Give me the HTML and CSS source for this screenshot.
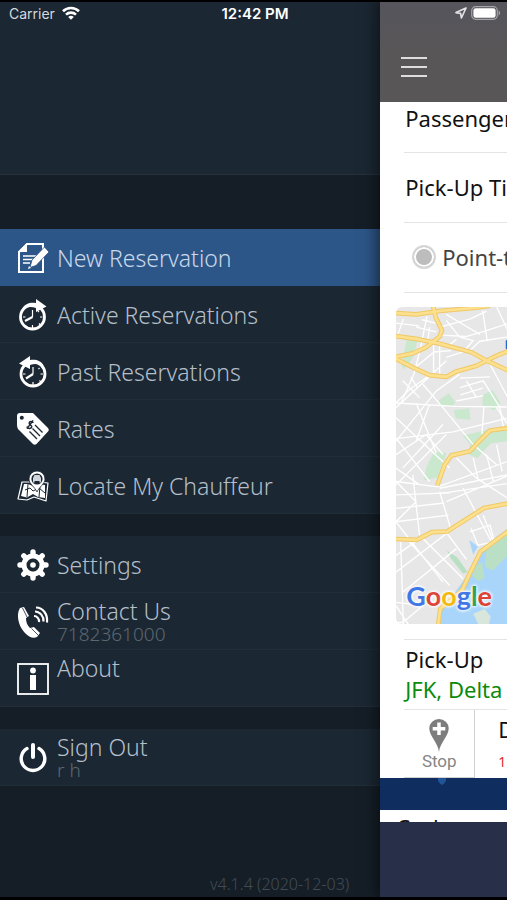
FILE: index.html
```html
<!DOCTYPE html>
<html lang="en">

<head>
  <meta charset="UTF-8">
  <meta name="viewport" content="width=device-width, initial-scale=1.0">
  <title>New Reservation</title>
  <link rel="stylesheet" href="styles.css">
</head>

<body>
  <div class="app">
    <div class="status-bar">
      <div class="status-left">
        <span>Carrier</span>
        <svg class="wifi" viewBox="0 0 18 14" fill="none" stroke="#fff" stroke-width="2.6">
          <path d="M1 5.2a11.5 11.5 0 0 1 16 0" />
          <path d="M4 8.6a7.2 7.2 0 0 1 10 0" />
          <path d="M9 13.8 6.2 11a4 4 0 0 1 5.6 0z" fill="#fff" stroke="none" />
        </svg>
      </div>
      <span class="status-time">12:42 PM</span>
      <div class="status-right">
        <svg class="location" viewBox="0 0 12 12" fill="none" stroke="#e4e4e6" stroke-width="1.6" stroke-linejoin="round">
          <path d="M11 1 1 5.6l4.6.8.8 4.6z" />
        </svg>
        <svg class="battery" viewBox="0 0 30 14">
          <rect x=".7" y=".7" width="25.6" height="12.6" rx="4" fill="none" stroke="#a5a4a7" stroke-width="1.2" />
          <rect x="2.4" y="2.2" width="22.2" height="9.6" rx="2.4" fill="#fff" />
          <path d="M27.6 4.6c2 .8 2 4 0 4.8z" fill="#a5a4a7" />
        </svg>
      </div>
    </div>

    <nav class="drawer">
      <div class="drawer-header"></div>

      <ul class="menu menu-first">
        <li>
          <a href="#new" class="item active">
            <svg class="icon" viewBox="0 0 32 32">
              <path d="M10 2h16v28H2V10z" fill="none" stroke="#fff" stroke-width="2" />
              <path d="M10 1v9H1z" fill="#fff" />
              <path d="M6 14h13M6 17.500h10M6 21h7" stroke="#fff" stroke-width="1.4" />
              <path d="M27.500 5 32 10 19 23.500l-6 2L15 18z" fill="#fff" stroke="#2d5688" stroke-width=".8" />
              <path d="m11 27 1-3 2 2z" fill="#fff" />
            </svg>
            <span class="label">New Reservation</span>
          </a>
        </li>
        <li>
          <a href="#active" class="item">
            <svg class="icon" viewBox="0 0 32 32">
              <circle cx="15.500" cy="18" r="12" fill="none" stroke="#fff" stroke-width="2.800" />
              <path d="M5 10C8 4 14 3 19 4V0l10.500 7.500L19 13V9C14 7 9 8 5 10z" fill="#fff" />
              <path d="M15.500 18 8 22" stroke="#fff" stroke-width="2.200" />
              <path d="M15.500 18v-7M15.500 26v3M6 18h2.500M23 18h2.500M22 24.500l1.500 1.500M22 12l-1 1" stroke="#fff" stroke-width="1.200" />
            </svg>
            <span class="label">Active Reservations</span>
          </a>
        </li>
        <li>
          <a href="#past" class="item">
            <svg class="icon" viewBox="0 0 32 32">
              <circle cx="16" cy="18" r="12" fill="none" stroke="#fff" stroke-width="2.800" />
              <path d="M27 10C24 4 18 3 13 4V0L2 7.500 13 13V9c5-2 10-1 14 1z" fill="#fff" />
              <path d="m16 18-7 4.500" stroke="#fff" stroke-width="2.200" />
              <path d="M16 18v-7M16 26v3M6 18h2.500M23.500 18H26M22.500 24.500 24 26M22.500 12l-1 1" stroke="#fff" stroke-width="1.200" />
            </svg>
            <span class="label">Past Reservations</span>
          </a>
        </li>
        <li>
          <a href="#rates" class="item">
            <svg class="icon" viewBox="0 0 32 32">
              <path d="M3 0h13l15 15q1.500 2 0 3.500L19.500 31q-2 1.500-3.500 0L1 16Q0 14 0 12V3q0-3 3-3z" fill="#fff" />
              <circle cx="4.800" cy="4.800" r="2" fill="#1b2733" />
              <path d="M16 9.500c-1.500-2-4.500-1-4 1s3 1.200 3 3.200-3.500 2.500-5 .3M15.500 7l-5 9" transform="rotate(8 13 12)" fill="none" stroke="#1b2733" stroke-width="1.500" />
              <path d="m18 12 7.500 7.500M15.500 15.500l7.500 7.500M12.500 18.500l7.500 7.500" stroke="#1b2733" stroke-width="1.300" />
            </svg>
            <span class="label">Rates</span>
          </a>
        </li>
        <li>
          <a href="#locate" class="item">
            <svg class="icon" viewBox="0 0 32 32" stroke-linejoin="round">
              <path d="M5 12 1 29l9 1 7-3 12 4 2-18-8-1z" fill="none" stroke="#fff" stroke-width="1.200" />
              <path d="M7 14 4 26l6 1.500 6-3.500 5 3 7 1V15l-6-1-6 2-5-2z" fill="#fff" />
              <path d="m8 20 5-2 3 3 6-3 6 5M11 14l-1 13M23 16l-1 11" fill="none" stroke="#1b2733" stroke-width="1" />
              <path d="M20 22c-2-5-8-8-8-13a8 8 0 0 1 16 0c0 5-6 8-8 13z" fill="#fff" stroke="#1b2733" stroke-width=".8" />
              <circle cx="20" cy="9" r="5.600" fill="#1b2733" />
              <path d="m16 8 1.500-3h5L24 8v4.500h-1.500V11h-5v1.500H16z" fill="#cfd5da" />
            </svg>
            <span class="label">Locate My Chauffeur</span>
          </a>
        </li>
      </ul>

      <ul class="menu">
        <li>
          <a href="#settings" class="item">
            <svg class="icon" viewBox="0 0 32 32">
              <circle cx="16" cy="16" r="9" fill="none" stroke="#fff" stroke-width="5" />
              <path d="M16 3v4M16 25v4M3 16h4M25 16h4M6.800 6.800l2.800 2.800M22.400 22.400l2.800 2.800M25.200 6.800l-2.800 2.800M9.600 22.400l-2.800 2.800" stroke="#fff" stroke-width="5.400" stroke-linecap="round" />
              <circle cx="16" cy="16" r="4.600" fill="none" stroke="#1b2733" stroke-width="3.600" />
              <circle cx="16" cy="16" r="2.800" fill="#fff" />
            </svg>
            <span class="label">Settings</span>
          </a>
        </li>
        <li>
          <a href="tel:7182361000" class="item">
            <svg class="icon" viewBox="0 0 32 32">
              <path d="M7 1 3 2C-1 8 1 20 8 27c4 4 8 6 12 4l3-4-6-6-4 1c-3-3-4-6-4-10l3-2z" fill="#fff" />
              <path d="m5.500 2 4.500 9M14.500 22.500l6.500 6.500" stroke="#1b2733" stroke-width=".8" />
              <path d="M17 10c3 0 5.500 3 5 6M18 5.500c5 0 9 5 8.500 10M19 1.500c7 0 12 7 11 15" fill="none" stroke="#fff" stroke-width="2.200" />
            </svg>
            <span class="text">
              <span class="label">Contact Us</span>
              <span class="sub">7182361000</span>
            </span>
          </a>
        </li>
        <li>
          <a href="#about" class="item">
            <svg class="icon" viewBox="0 0 32 32">
              <rect x="1" y="1" width="30" height="30" fill="none" stroke="#fff" stroke-width="1.800" />
              <circle cx="16" cy="7.500" r="2.900" fill="#fff" />
              <path d="M13 12h6v15h-6z" fill="#fff" />
            </svg>
            <span class="text">
              <span class="label">About</span>
              <span class="sub"></span>
            </span>
          </a>
        </li>
      </ul>

      <ul class="menu">
        <li>
          <a href="#signout" class="item">
            <svg class="icon" viewBox="0 0 32 32" fill="none" stroke="#fff" stroke-width="3.400" stroke-linecap="round">
              <path d="M10 6.500a11.800 11.800 0 1 0 12 0" />
              <path d="M16 3v12" stroke-width="4" />
            </svg>
            <span class="text">
              <span class="label">Sign Out</span>
              <span class="sub">r h</span>
            </span>
          </a>
        </li>
      </ul>

      <p class="version">v4.1.4 (2020-12-03)</p>
    </nav>

    <main class="page">
      <header class="page-header">
        <button class="menu-button" type="button" aria-label="Menu">
          <span></span>
          <span></span>
          <span></span>
        </button>
      </header>

      <div class="page-content">
        <div class="row row-top">Passenger</div>
        <div class="row">Pick-Up Time</div>
        <label class="row row-radio">
          <input type="radio" name="trip" class="radio">
          Point-to-Point
        </label>

        <div class="map">
          <svg viewBox="0 0 330 951" preserveAspectRatio="xMinYMin slice">
            <defs>
              <g id="highways">
                <path d="m-5 18 65 4 70-10L240 2l40-6" />
                <path d="m110-5 8 35 19 40-7 18-40 32-40 18-55 12" />
                <path d="m-5 86 65 9 65 13 100 27 45 25 70 32" />
                <path d="m-5 152 55 28 50 23 50 5 30-16 60-17 60-30 40-16" />
                <path d="m340 360-60 8-35 35-25 27-55 12-20 28-22 62" />
                <path d="m-5 691 67 3 45-23 45-2 110-70 78-15" />
                <path d="m340 664-88 65-30 60-25 55-65 55-8 60" />
              </g>
            </defs>
            <rect width="1200" height="951" fill="#e7e7e7" />
            <g fill="#c9e8cd">
              <path d="M32 98h32l-12 50-28 38-8-12z" />
              <path d="m128 278 30-22 18 28-4 12h-44z" />
              <path d="m258 262 30-14 24 38-20 22-34-16z" />
              <path d="m172 308 46-6 4 34-44-4z" />
              <path d="m198 384 80-20 55-2v38l-50 6-40 44-30-12 8-30z" />
              <path d="m90 480 24-50 36 6-26 72-40 8z" />
            </g>
            <path d="M333 660 252 720l-40 80-80 110-8 45h209z" fill="#a9d5fb" />
            <path d="m218 694 26 20-14 24z" fill="#a9d5fb" />
            <g fill="#b9e0c4">
              <path d="m152 726 30 20 32 44-14 4-36-44z" />
              <path d="m232 776 24-18 8 50-20 8-16-14z" />
              <path d="m270 720 63-50v70l-45 46-24-14z" />
              <path d="m230 914 34-14 18 22-6 29h-28z" fill="#d8e6dc" />
            </g>
            <!-- side streets -->
            <g fill="none" stroke="#fff" stroke-width="4">
              <path d="m92 28-18 90-20 80-40 90M78 38l40 10M60 60l60 14M100 60l-6 46M22 36l-18 50M0 48l70 8" />
              <path d="m136 84 72 4M130 60l90-24 50-24M208 88l50-14 74-24M258 10l14 92M300 0l33 70M150 40l40 50 40 10-30 34M220 130l30-28 80-12M180 96l-24 20M150 22l100 60" />
              <path d="M112 112v90M130 112v90M60 178l54-44 50-4M150 150l60-20M0 286l40-40 60-42M20 220l50 50M44 210l20 30M0 300l150-140" />
              <path d="M0 286l180 10 153 2M0 400l120-150 70-50M80 230l60 70 90 110 70 60M0 392l170-20 160-40M60 286l60 150M100 290l-40 110" />
              <path d="m190 240 70-20 50 80 10 60M180 280l80-16M192 262l66-20M210 220l30 50M190 212l90-4M280 170l53 100" />
              <path d="m0 330 160 150M0 440l90-60 50 60M20 480l120-130M0 530l150-150M0 390l100 130M262 298l-6 80M300 300l33 50" />
              <path d="m0 520 124 16 209-76M0 480l70 50M130 540l203-40M130 556l203-30M150 580l180-76M180 450l60 60 93 60M230 450l14 60M270 440l20 80M300 410l16 80" />
              <path d="m50 500 20 180M130 550l34 114M0 560l160-6M0 600l144-16M0 640l156-20M200 540l90 170M0 520l60 60-60 60" />
              <path d="m0 640 140 180M0 740l100-70M0 790l170-130M14 700l8 250M40 700l120 130M80 690l120 120M20 850l160-130M0 880l80 10-60 50H0M0 890l40 61" />
              <path d="m150 672 60 80M224 660l20 50 50-10-14-50-60 20M260 620l30 80" />
            </g>
            <g fill="none" stroke-linejoin="round">
              <use href="#highways" stroke="#f0c866" stroke-width="14" />
              <use href="#highways" stroke="#fce08e" stroke-width="8" />
            </g>
            <rect x="327" y="98" width="40" height="28" rx="3" fill="#2b68cb" />
          </svg>
          <div class="google"><span class="blue">G</span><span class="red">o</span><span class="yellow">o</span><span class="blue">g</span><span class="green">l</span><span class="red">e</span></div>
        </div>

        <section class="pickup">
          <div>Pick-Up</div>
          <div class="address">JFK, Delta</div>
        </section>

        <section class="stops">
          <button class="stop-button" type="button">
            <svg class="pin" viewBox="0 0 20 34">
              <path d="M10 34C9 24 0 18 0 9.500a10 9.500 0 0 1 20 0C20 18 11 24 10 34z" fill="#7d7d7d" />
              <path d="M10 3.500v13M3.500 10h13" stroke="#fff" stroke-width="3.600" />
            </svg>
            Stop
          </button>
          <div class="dropoff">
            <div>Drop-Off</div>
            <div class="required">1</div>
          </div>
        </section>

        <div class="band">
          <svg class="band-mark" viewBox="0 0 10 8">
            <path d="M1 0h8q1 4-4 7-5-3-4-7z" fill="#1f5596" />
          </svg>
        </div>
        <div class="row-bottom">Cash</div>
      </div>

      <footer class="page-footer"></footer>
    </main>
  </div>
</body>

</html>
```
FILE: styles.css
```css
* {
  box-sizing: border-box;
}

html,
body {
  margin: 0;
  padding: 0;
  background-color: #000;
  font-family: "Noto Sans", "Open Sans", sans-serif;
}

.app {
  position: relative;
  display: grid;
  grid-template-columns: 3fr 1fr;
  height: 100vh;
  min-height: 900px;
  border-top: 2px solid #000;
  border-bottom: 3px solid #000;
  overflow: hidden;
}

/* status bar */

.status-bar {
  position: absolute;
  top: 0;
  left: 0;
  right: 0;
  z-index: 3;
  display: grid;
  grid-template-columns: 1fr auto 1fr;
  align-items: center;
  height: 22px;
  padding: 0 6px 0 9px;
  color: #fff;
  font-family: Inter, Roboto, sans-serif;
  font-size: 14px;
}

.status-left,
.status-right {
  display: flex;
  align-items: center;
  gap: 7px;
}

.status-left {
  color: #d5dade;
}

.status-right {
  justify-content: flex-end;
  gap: 4px;
}

.status-time {
  font-size: 15px;
  font-weight: 600;
}

.wifi {
  width: 18px;
  height: 14px;
}

.location {
  width: 12px;
  height: 12px;
}

.battery {
  width: 30px;
  height: 14px;
}

/* drawer */

.drawer {
  display: flex;
  flex-direction: column;
  min-width: 0;
  background-color: #151e27;
}

.drawer-header {
  height: 173px;
  background-color: #1b2733;
  border-bottom: 1px solid #25313d;
}

.menu {
  list-style: none;
  margin: 22px 0 0;
  padding: 0;
  background-color: #1b2733;
}

.menu-first {
  margin-top: 54px;
}

.item {
  display: flex;
  align-items: center;
  gap: 8px;
  height: 57px;
  padding: 1px 17px 0;
  border-bottom: 1px solid #212d39;
  color: #b4bfca;
  text-decoration: none;
}

.item.active {
  background-color: #2d5688;
  border-bottom-color: #2d5688;
  color: #c9d8ea;
}

.icon {
  flex: none;
  width: 32px;
  height: 32px;
}

.label,
.sub {
  display: block;
  font-weight: 300;
  white-space: nowrap;
}

.label {
  font-size: 23px;
  line-height: 24px;
}

.sub {
  height: 22px;
  font-size: 19px;
  line-height: 22px;
  color: #5d6871;
}

.version {
  margin: auto 31px 3px 0;
  font-size: 16px;
  font-weight: 300;
  line-height: 20px;
  text-align: right;
  color: #424b54;
}

/* page pushed aside by the drawer */

.page {
  position: relative;
  z-index: 2;
  display: flex;
  flex-direction: column;
  min-width: 0;
  min-height: 0;
  background-color: #fff;
  box-shadow: 0 0 16px 2px rgba(0, 0, 0, 0.6);
  color: #111;
  font-size: 22px;
  white-space: nowrap;
}

.page-header {
  flex: none;
  height: 100px;
  padding: 50px 20px 0;
  background: linear-gradient(#56555d, #585657 50%);
}

.menu-button {
  display: flex;
  flex-direction: column;
  justify-content: center;
  gap: 7px;
  width: 28px;
  height: 30px;
  padding: 0 1px;
  border: none;
  background: none;
  cursor: pointer;
}

.menu-button span {
  height: 2px;
  background-color: #dedddd;
}

.page-content {
  flex: 1;
  min-height: 0;
  overflow: hidden;
}

.row {
  display: flex;
  align-items: center;
  height: 70px;
  margin-left: 24px;
  padding: 0 0 2px 1px;
  border-bottom: 1px solid #e4e4e4;
}

.row-top {
  height: 51px;
  padding-bottom: 19px;
}

.row-radio {
  gap: 6px;
  padding-left: 8px;
  color: #444;
}

.radio {
  appearance: none;
  flex: none;
  width: 24px;
  height: 24px;
  margin: 0;
  border: 2px solid #d6d6d6;
  border-radius: 50%;
  background-color: #bdbdbd;
  box-shadow: inset 0 0 0 2px #fff;
}

.map {
  position: relative;
  height: 317px;
  margin: 14px 0 15px 16px;
  border-radius: 6px 0 0 6px;
  overflow: hidden;
}

.map svg {
  display: block;
  width: 100%;
  height: 100%;
}

.google {
  position: absolute;
  left: 10px;
  bottom: 10px;
  font-family: Lato, sans-serif;
  font-size: 27px;
  font-weight: 700;
  line-height: 36px;
  text-shadow: 0 0 3px #fff, 0 0 3px #fff, 0 0 4px #fff;
}

.blue {
  color: #4077e4;
}

.red {
  color: #dd4438;
}

.yellow {
  color: #f2b90f;
}

.green {
  color: #31a350;
}

.pickup {
  margin-left: 24px;
  padding: 4px 0 5px 1px;
  border-top: 1px solid #e4e4e4;
  border-bottom: 1px solid #e4e4e4;
  line-height: 30px;
}

.address {
  color: #0b8a0b;
}

.stops {
  display: flex;
  height: 68px;
  margin-left: 24px;
}

.stop-button {
  display: flex;
  flex-direction: column;
  align-items: center;
  flex: none;
  width: 71px;
  padding: 9px 0 0;
  border: none;
  border-right: 1px solid #d0d0d0;
  border-bottom: 1px solid #d0d0d0;
  background: none;
  color: #858585;
  font-family: Roboto, sans-serif;
  font-size: 17px;
  line-height: 18px;
  cursor: pointer;
}

.pin {
  width: 20px;
  height: 33px;
}

.dropoff {
  padding: 4px 0 0 23px;
  line-height: 30px;
}

.required {
  color: #e8282d;
  font-size: 14px;
  line-height: 36px;
}

.band {
  height: 32px;
  padding-left: 57px;
  background-color: #102d5f;
}

.band-mark {
  display: block;
  width: 10px;
  height: 8px;
}

.row-bottom {
  padding: 2px 0 0 16px;
  line-height: 30px;
}

.page-footer {
  flex: none;
  height: 75px;
  background-color: #273048;
}
```
